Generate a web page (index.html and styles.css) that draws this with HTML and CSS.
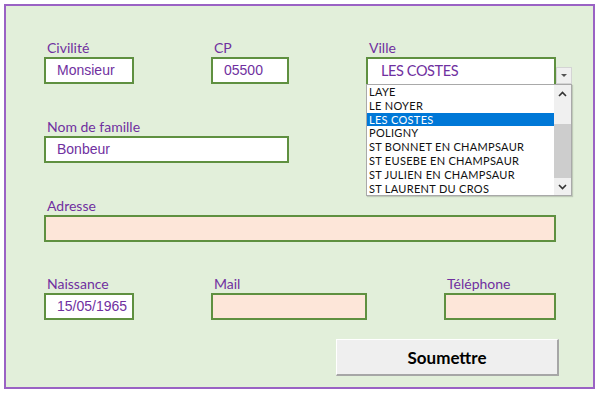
FILE: index.html
```html
<!DOCTYPE html>
<html lang="fr">
<head>
    <meta charset="UTF-8">
    <title>Formulaire client</title>
    <link rel="stylesheet" href="styles.css">
</head>
<body>
    <div class="frame">
        <div class="row row-1">
            <div class="field w-civ">
                <div class="label">Civilité</div>
                <div class="box">Monsieur</div>
            </div>
            <div class="field w-cp">
                <div class="label">CP</div>
                <div class="box">05500</div>
            </div>
            <div class="field w-ville ville">
                <div class="label">Ville</div>
                <div class="combo">
                    <div class="box box-ville">LES COSTES</div>
                    <div class="drop-btn">
                        <svg width="8" height="5" viewBox="0 0 8 5"><path d="M1 1 L4 4 L7 1 Z" fill="#555"/></svg>
                    </div>
                </div>
                <div class="list">
                    <ul class="items">
                        <li>LAYE</li>
                        <li>LE NOYER</li>
                        <li class="selected">LES COSTES</li>
                        <li>POLIGNY</li>
                        <li>ST BONNET EN CHAMPSAUR</li>
                        <li>ST EUSEBE EN CHAMPSAUR</li>
                        <li>ST JULIEN EN CHAMPSAUR</li>
                        <li>ST LAURENT DU CROS</li>
                    </ul>
                    <div class="scroll">
                        <div class="arrow">
                            <svg width="9" height="6" viewBox="0 0 9 6"><path d="M1 5 L4.5 1.5 L8 5" fill="none" stroke="#333" stroke-width="1.6"/></svg>
                        </div>
                        <div class="track">
                            <div class="thumb"></div>
                        </div>
                        <div class="arrow">
                            <svg width="9" height="6" viewBox="0 0 9 6"><path d="M1 1 L4.5 4.5 L8 1" fill="none" stroke="#333" stroke-width="1.6"/></svg>
                        </div>
                    </div>
                </div>
            </div>
        </div>

        <div class="row row-2">
            <div class="field w-nom">
                <div class="label">Nom de famille</div>
                <div class="box">Bonbeur</div>
            </div>
        </div>

        <div class="row row-3">
            <div class="field w-adr">
                <div class="label">Adresse</div>
                <div class="box empty"></div>
            </div>
        </div>

        <div class="row row-4">
            <div class="field w-civ">
                <div class="label">Naissance</div>
                <div class="box">15/05/1965</div>
            </div>
            <div class="field w-mail">
                <div class="label">Mail</div>
                <div class="box empty"></div>
            </div>
            <div class="field w-tel">
                <div class="label">Téléphone</div>
                <div class="box empty"></div>
            </div>
        </div>

        <div class="row row-5">
            <button class="submit">Soumettre</button>
        </div>
    </div>
</body>
</html>
```

FILE: styles.css
```css
body {
    margin: 0;
    padding: 4px;
    background-color: #fff;
    font-family: Lato, "Liberation Sans", sans-serif;
}
.frame {
    box-sizing: border-box;
    width: 591px;
    height: 385px;
    border: 2px solid #9a62c4;
    background-color: #e2efda;
    padding: 34px 0 0 38px;
}
.row {
    display: flex;
    gap: 77px;
}
.row-2, .row-3 {
    margin-top: 35px;
}
.row-4 {
    margin-top: 34px;
}
.row-5 {
    margin-top: 19px;
    padding-left: 292px;
}
.field {
    display: flex;
    flex-direction: column;
}
.label {
    height: 16px;
    line-height: 16px;
    margin-bottom: 1px;
    padding-left: 3px;
    font-size: 14px;
    color: #7030a0;
}
.box {
    box-sizing: border-box;
    height: 27px;
    border: 2px solid #5f9040;
    background-color: #fff;
    padding-left: 11px;
    line-height: 23px;
    font-family: "Liberation Sans", Arial, sans-serif;
    font-size: 14px;
    color: #7030a0;
    white-space: nowrap;
}
.box.empty {
    background-color: #fde6d9;
}
.w-civ { width: 90px; }
.w-cp { width: 78px; }
.w-ville { width: 190px; }
.w-nom { width: 245px; }
.w-adr { width: 512px; }
.w-mail { width: 156px; }
.w-tel { width: 112px; }

.ville {
    position: relative;
}
.combo {
    display: flex;
    align-items: flex-end;
}
.box-ville {
    width: 190px;
    flex-shrink: 0;
    border-bottom: none;
    padding-left: 13px;
    font-family: Lato, "Liberation Sans", sans-serif;
    font-size: 14.5px;
    letter-spacing: -0.4px;
}
.drop-btn {
    box-sizing: border-box;
    width: 16px;
    height: 17px;
    flex-shrink: 0;
    background-color: #f0f0f0;
    border: 1px solid #d4d4d4;
    display: flex;
    align-items: center;
    justify-content: center;
}
.list {
    position: absolute;
    top: 44px;
    left: 0;
    box-sizing: border-box;
    width: 206px;
    height: 112px;
    background-color: #fff;
    border: 1px solid #a9a9a9;
    box-shadow: 1px 1px 1px rgba(0, 0, 0, 0.15);
    display: flex;
}
.items {
    list-style: none;
    margin: 0;
    padding: 0;
    flex: 1;
}
.items li {
    height: 13.8px;
    line-height: 14.5px;
    padding-left: 2px;
    font-size: 11px;
    letter-spacing: 0.3px;
    color: #111;
    white-space: nowrap;
}
.items li.selected {
    background-color: #0078d7;
    color: #fff;
}
.scroll {
    width: 17px;
    background-color: #f0f0f0;
    display: flex;
    flex-direction: column;
}
.arrow {
    height: 17px;
    display: flex;
    align-items: center;
    justify-content: center;
}
.track {
    flex: 1;
    padding-top: 22px;
}
.thumb {
    height: 54px;
    background-color: #cdcdcd;
}
.submit {
    box-sizing: border-box;
    width: 223px;
    height: 37px;
    border: none;
    border-top: 1px solid #fff;
    border-left: 1px solid #fff;
    border-right: 2px solid #a6a6a6;
    border-bottom: 2px solid #a6a6a6;
    background-color: #efefef;
    font-family: Lato, "Liberation Sans", sans-serif;
    font-weight: bold;
    font-size: 17px;
    color: #000;
}
```
